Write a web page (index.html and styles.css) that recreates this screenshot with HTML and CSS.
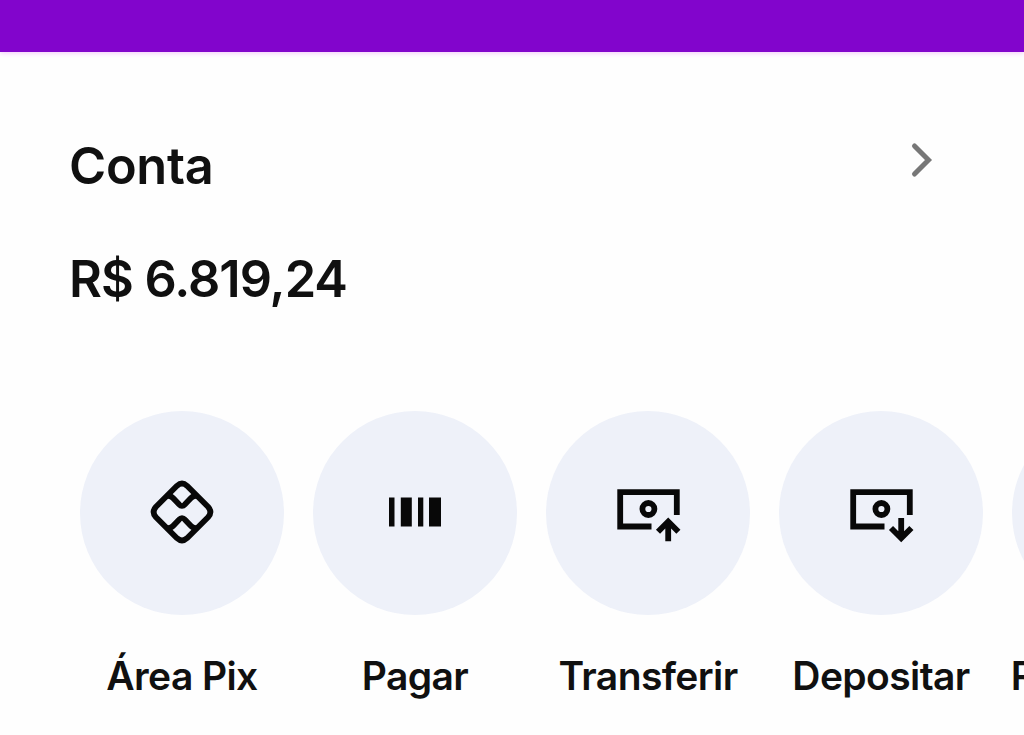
FILE: index.html
```html
<!doctype html>
<html lang="pt-BR">
    <head>
        <meta charset="UTF-8" />
        <meta name="viewport" content="width=device-width, initial-scale=1.0" />
        <title>Conta</title>
        <link rel="stylesheet" href="styles.css">
    </head>
    <body>
        <header class="topbar"></header>
        <main class="account">
            <div class="account-header">
                <h1>Conta</h1>
                <svg class="chevron" width="24" height="36" viewBox="0 0 24 36">
                    <path d="M4.5 4 L18.5 18 L4.5 32" />
                </svg>
            </div>
            <p class="balance">R$ 6.819,24</p>
        </main>
        <nav class="actions">
            <a class="action">
                <span class="circle">
                    <svg class="pix" width="68" height="68" viewBox="0 0 68 68">
                        <path d="M29 7.8 Q34 3.2 39 7.8 L60 28.8 Q64.8 34 60 39.2 L39 60.2 Q34 64.8 29 60.2 L8 39.2 Q3.2 34 8 28.8 Z" />
                        <path d="M18.5 18.2 Q22.5 17.2 25.5 20.5 L31 26.3 Q34 29.7 37 26.3 L42.5 20.5 Q45.5 17.2 49.5 18.2" />
                        <path d="M18.5 49.8 Q22.5 50.8 25.5 47.5 L31 41.7 Q34 38.3 37 41.7 L42.5 47.5 Q45.5 50.8 49.5 49.8" />
                    </svg>
                </span>
                <span class="label">Área Pix</span>
            </a>
            <a class="action">
                <span class="circle">
                    <svg class="barcode" width="54" height="30" viewBox="0 0 54 30">
                        <path d="M1 0.5h5.5v29H1z M12.8 0.5h11v29h-11z M30 0.5h5.3v29H30z M41 0.5h12v29H41z" />
                    </svg>
                </span>
                <span class="label">Pagar</span>
            </a>
            <a class="action">
                <span class="circle">
                    <svg class="money" width="68" height="60" viewBox="0 0 68 60">
                        <path d="M37.5 39.5 H6.2 V5.2 H62.8 V28" />
                        <circle cx="34.4" cy="22" r="6" />
                        <path d="M54.2 54.2 V34.5 M44 44.7 L54.2 34.5 L64.4 44.7" />
                    </svg>
                </span>
                <span class="label">Transferir</span>
            </a>
            <a class="action">
                <span class="circle">
                    <svg class="money" width="68" height="60" viewBox="0 0 68 60">
                        <path d="M37.5 39.5 H6.2 V5.2 H62.8 V28" />
                        <circle cx="34.4" cy="22" r="6" />
                        <path d="M54.2 31 V51 M44 41 L54.2 51.2 L64.4 41" />
                    </svg>
                </span>
                <span class="label">Depositar</span>
            </a>
            <a class="action">
                <span class="circle"></span>
                <span class="label">Recarregar</span>
            </a>
        </nav>
    </body>
</html>
```
FILE: styles.css
```css
* {
    box-sizing: border-box;
}
body {
    margin: 0;
    height: 735px;
    overflow: hidden;
    background: #fefefe;
    color: #101010;
    font-family: Inter, "Liberation Sans", sans-serif;
}
.topbar {
    height: 52px;
    background: #8205cc;
    box-shadow: 0 1px 5px #f3c8fb;
}
.account {
    height: 359px;
    padding: 84px 90px 0 69px;
}
.account-header {
    display: flex;
    justify-content: space-between;
    align-items: flex-start;
}
h1,
.balance {
    margin: 0;
    font-size: 50.5px;
    line-height: 60px;
    font-weight: 570;
}
h1 {
    letter-spacing: -0.3px;
}
.balance {
    margin-top: 53px;
    letter-spacing: -1px;
}
.chevron {
    margin-top: 6px;
    fill: none;
    stroke: #777;
    stroke-width: 5;
    stroke-linecap: round;
}
.actions {
    display: flex;
    gap: 29px;
    padding-left: 80px;
    overflow: hidden;
}
.action {
    flex: 0 0 204px;
    min-width: 0;
    display: flex;
    flex-direction: column;
    align-items: center;
}
.circle {
    display: flex;
    justify-content: center;
    align-items: center;
    width: 204px;
    height: 204px;
    border-radius: 50%;
    background: #eef1f9;
}
.label {
    margin-top: 37px;
    font-size: 39px;
    line-height: 48px;
    font-weight: 570;
    letter-spacing: -0.6px;
    white-space: nowrap;
}
.action:last-child .label {
    letter-spacing: -0.3px;
}
.pix {
    margin-bottom: 2px;
    fill: none;
    stroke: #080808;
    stroke-width: 5.7;
    stroke-linejoin: round;
}
.barcode {
    margin-bottom: 2px;
    fill: #080808;
}
.money {
    margin-top: 8px;
    fill: none;
    stroke: #080808;
    stroke-width: 5.8;
}
```
